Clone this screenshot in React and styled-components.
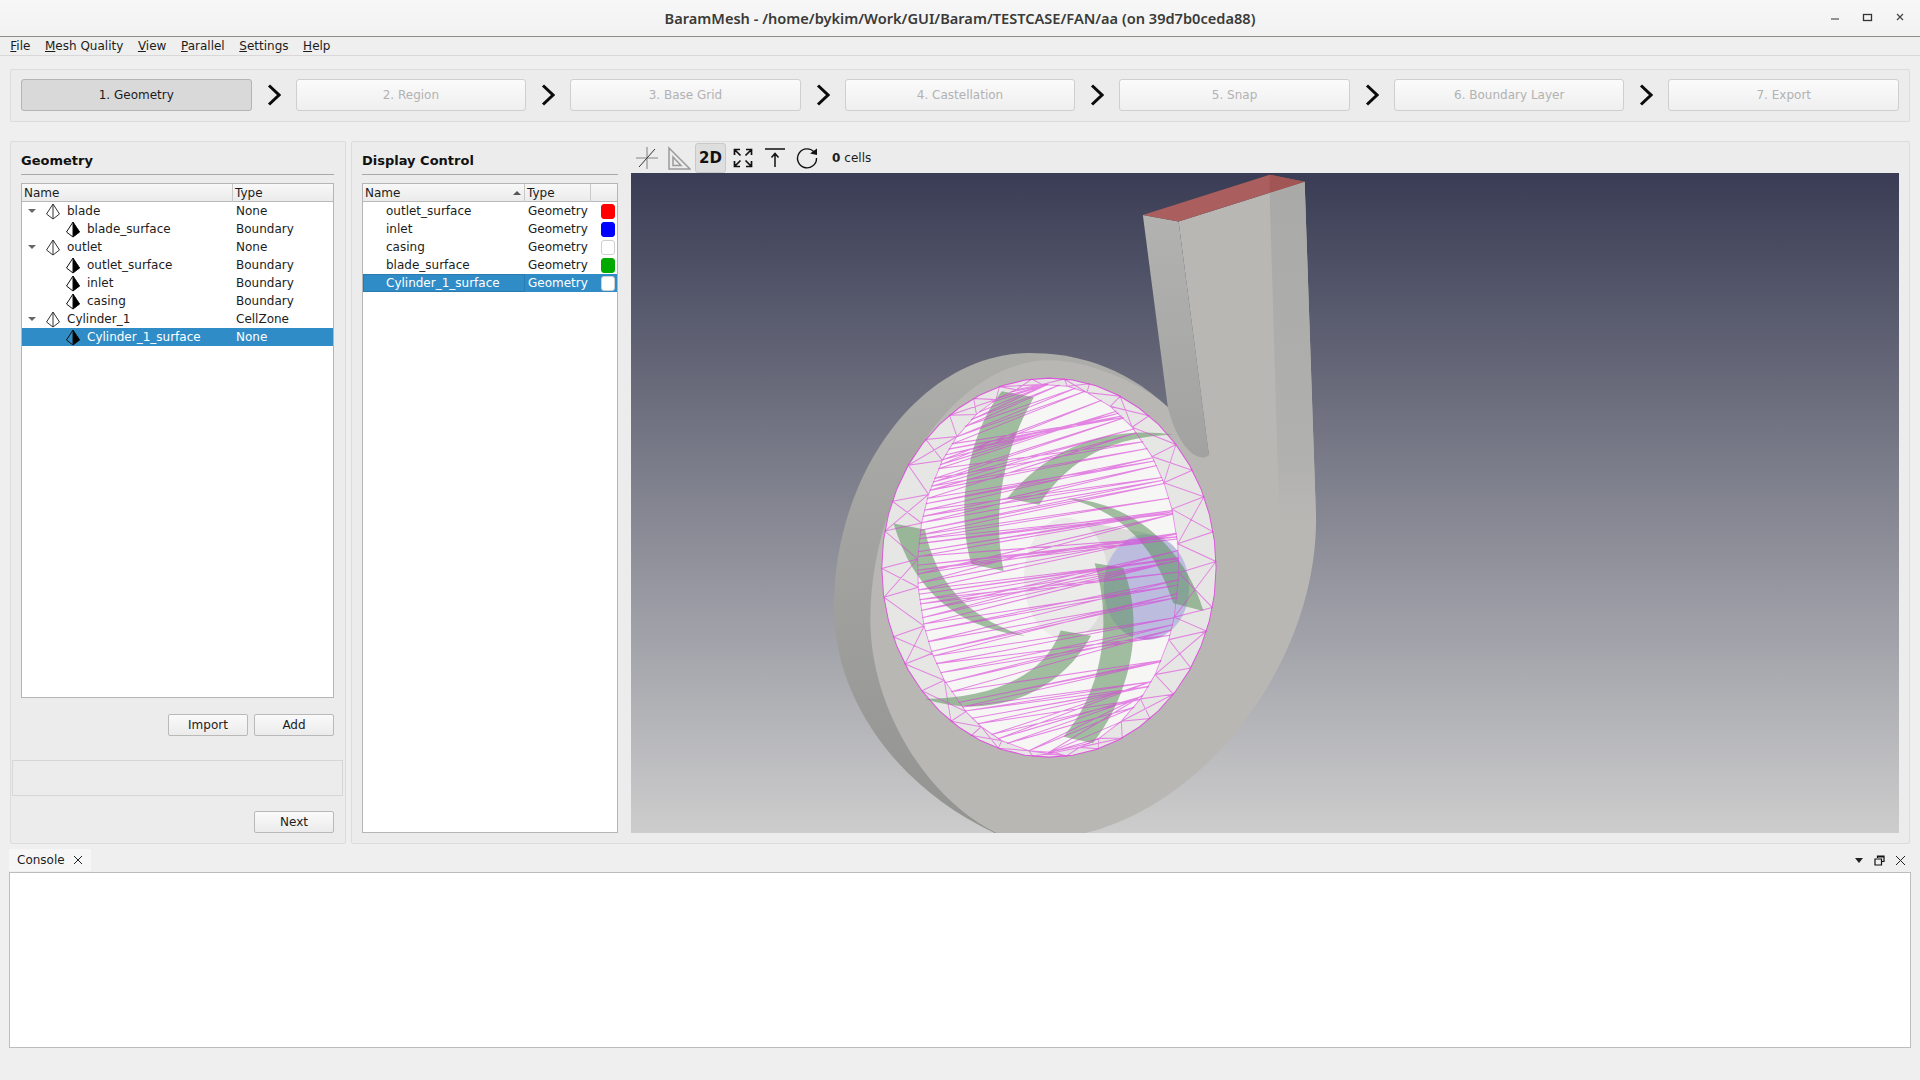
import React from 'react'
import styled, { createGlobalStyle } from 'styled-components'

const Global = createGlobalStyle`
  html, body { margin: 0; padding: 0; background: #efefef; }
  * { box-sizing: border-box; }
  body { font-family: "DejaVu Sans", sans-serif; font-size: 12px; color: #1c1c1c; }
`

const Window = styled.div`
  width: 1920px;
  height: 1080px;
  display: flex;
  flex-direction: column;
  overflow: hidden;
  background: #efefef;
`
const TitleBar = styled.header`
  height: 37px;
  flex: none;
  display: flex;
  align-items: center;
  justify-content: center;
  position: relative;
  background: linear-gradient(#f7f7f7, #f2f2f2);
  border-bottom: 1px solid #8e8e89;
  font-family: "Noto Sans", sans-serif;
  font-size: 14.6px;
  font-weight: 600;
  color: #3a3a38;
`
const WindowControls = styled.div`
  position: absolute;
  right: 13px;
  top: 11px;
  display: flex;
  gap: 21px;
`
const MenuBar = styled.nav`
  height: 19px;
  flex: none;
  display: flex;
  padding: 1px 0 0 3px;
  border-bottom: 1px solid #d8d8d8;
  line-height: 17px;
`
const MenuItem = styled.span`
  padding: 0 7.3px;
`
const StepsPanel = styled.section`
  height: 53px;
  flex: none;
  margin: 13px 10px 0;
  padding: 9px 10px 0;
  display: flex;
  background: #ececec;
  border: 1px solid #dcdcdc;
  border-radius: 2px;
`
const StepButton = styled.div`
  flex: 1;
  height: 32px;
  display: flex;
  align-items: center;
  justify-content: center;
  border-radius: 3px;
  border: 1px solid ${props => props.$active ? '#b4b4b4' : '#cfcfcf'};
  background: ${props => props.$active ? '#d9d9d9' : 'linear-gradient(#fbfbfb, #efefef)'};
  color: ${props => props.$active ? '#1c1c1c' : '#b2b2b2'};
`
const StepArrow = styled.div`
  width: 44px;
  flex: none;
  display: flex;
  align-items: center;
  justify-content: center;
  height: 32px;
`
const Columns = styled.div`
  height: 703px;
  flex: none;
  margin: 19px 10px 0;
  display: flex;
  gap: 5px;
`
const Panel = styled.section`
  background: #ececec;
  border: 1px solid #dcdcdc;
  border-radius: 2px;
`
const GeometryPanel = styled(Panel)`
  width: 336px;
  flex: none;
  padding: 0 11px 10px 10px;
  display: flex;
  flex-direction: column;
`
const ViewPanel = styled(Panel)`
  flex: 1;
  display: flex;
  padding: 0 10px 10px 10px;
`
const PanelTitle = styled.h3`
  margin: 0;
  height: 33px;
  flex: none;
  padding-top: 11px;
  font-size: 13px;
  line-height: 16px;
  font-weight: 700;
  color: #111;
  border-bottom: 1px solid #a9a9a9;
`
const Table = styled.div`
  margin-top: 8px;
  background: #fff;
  border: 1px solid #b5b5b5;
  display: flex;
  flex-direction: column;
  overflow: hidden;
`
const TreeTable = styled(Table)`
  height: 515px;
  flex: none;
`
const DisplayTable = styled(Table)`
  flex: 1;
`
const Header = styled.div`
  height: 18px;
  flex: none;
  display: grid;
  grid-template-columns: ${props => props.$cols};
  background: linear-gradient(#f8f8f8, #ebebeb);
  border-bottom: 1px solid #b9b9b9;
  line-height: 18px;
`
const HeaderCell = styled.div`
  padding-left: 2px;
  border-right: 1px solid #c8c8c8;
  position: relative;
  &:last-child { border-right: 0; }
`
const SortMark = styled.span`
  position: absolute;
  right: 3px;
  top: 7px;
  border-left: 4px solid transparent;
  border-right: 4px solid transparent;
  border-bottom: 4px solid #555;
`
const Row = styled.div`
  height: 18px;
  flex: none;
  display: grid;
  grid-template-columns: ${props => props.$cols};
  align-items: center;
  background: ${props => props.$selected ? '#308cc6' : 'transparent'};
  color: ${props => props.$selected ? '#fff' : '#1c1c1c'};
  line-height: 18px;
  white-space: nowrap;
`
const NameCell = styled.div`
  display: flex;
  align-items: center;
  padding-left: ${props => props.$child ? 43 : 6}px;
`
const Expander = styled.span`
  width: 0;
  height: 0;
  margin-right: 9px;
  border-left: 4px solid transparent;
  border-right: 4px solid transparent;
  border-top: 4px solid #666;
`
const ItemIcon = styled.svg`
  width: 16px;
  height: 17px;
  margin-right: 6px;
  flex: none;
`
const TypeCell = styled.div`
  padding-left: 3px;
`
const ColorName = styled.div`
  padding-left: 23px;
  height: 18px;
  outline: ${props => props.$focus ? '1px solid #2a7cb0' : 'none'};
  outline-offset: -1px;
`
const Swatch = styled.span`
  width: 14px;
  height: 15px;
  margin-left: 10px;
  border-radius: 3px;
  background: ${props => props.$color};
  border: 1px solid ${props => props.$color === '#ffffff' ? '#cfcfcf' : props.$color};
  display: block;
`
const ButtonRow = styled.div`
  display: flex;
  justify-content: flex-end;
  gap: 6px;
  margin-top: ${props => props.$top}px;
`
const Button = styled.div`
  width: 80px;
  height: 22px;
  display: flex;
  align-items: center;
  justify-content: center;
  border: 1px solid #b9b9b9;
  border-radius: 2px;
  background: linear-gradient(#fafafa, #ebebeb);
`
const MessageBox = styled.div`
  height: 36px;
  margin: 24px -9px 0 -9px;
  border: 1px solid #d6d6d6;
  flex: none;
`
const DisplayColumn = styled.div`
  width: 256px;
  flex: none;
  display: flex;
  flex-direction: column;
`
const ViewColumn = styled.div`
  flex: 1;
  margin-left: 13px;
  display: flex;
  flex-direction: column;
`
const Toolbar = styled.div`
  height: 31px;
  flex: none;
  display: flex;
  align-items: center;
  gap: 1px;
`
const ToolButton = styled.div`
  width: 31px;
  height: 30px;
  display: flex;
  align-items: center;
  justify-content: center;
  border-radius: 3px;
  border: 1px solid ${props => props.$on ? '#c8c8c8' : 'transparent'};
  background: ${props => props.$on ? '#dedede' : 'transparent'};
  font-size: 15px;
  font-weight: 700;
  color: #111;
`
const CellCount = styled.span`
  margin-left: 9px;
  font-size: 12px;
  b { margin-right: 4px; }
`
const Viewport = styled.svg`
  flex: 1;
  display: block;
  width: 100%;
  min-height: 0;
  background: linear-gradient(#393c54, #cdcdcd);
`
const DockHead = styled.div`
  height: 28px;
  flex: none;
  margin-left: 9px;
  padding: 5px 14px 0 0;
  display: flex;
  justify-content: space-between;
`
const ConsoleTab = styled.div`
  width: 82px;
  height: 22px;
  display: flex;
  align-items: center;
  gap: 8px;
  padding-left: 8px;
  background: #f6f6f6;
`
const DockButtons = styled.div`
  display: flex;
  align-items: center;
  gap: 10px;
  height: 23px;
`
const ConsoleBody = styled.div`
  height: 176px;
  flex: none;
  margin: 0 9px;
  background: #fff;
  border: 1px solid #bcbcbc;
`

const STEPS = ['1. Geometry', '2. Region', '3. Base Grid', '4. Castellation', '5. Snap', '6. Boundary Layer', '7. Export']
const MENUS = [['F', 'ile'], ['M', 'esh Quality'], ['V', 'iew'], ['P', 'arallel'], ['S', 'ettings'], ['H', 'elp']]
const TREE = [
  { name: 'blade', type: 'None' },
  { name: 'blade_surface', type: 'Boundary', child: true },
  { name: 'outlet', type: 'None' },
  { name: 'outlet_surface', type: 'Boundary', child: true },
  { name: 'inlet', type: 'Boundary', child: true },
  { name: 'casing', type: 'Boundary', child: true },
  { name: 'Cylinder_1', type: 'CellZone' },
  { name: 'Cylinder_1_surface', type: 'None', child: true, selected: true },
]
const DISPLAY = [
  { name: 'outlet_surface', color: '#ff0000' },
  { name: 'inlet', color: '#0000ff' },
  { name: 'casing', color: '#ffffff' },
  { name: 'blade_surface', color: '#00aa00' },
  { name: 'Cylinder_1_surface', color: '#ffffff', selected: true },
]
const TREE_COLS = '211px 1fr'
const DISPLAY_COLS = '162px 66px 1fr'

const PyramidIcon = ({ filled }) => (
  <ItemIcon viewBox="0 0 16 17">
    {filled && <path d="M8 1 L15 11 L8 16 Z" fill="#000" />}
    <path d="M8 1 L1.5 11 L8 16 L14.5 11 Z M8 1 V16" fill="none" stroke={filled ? '#111' : '#333'} strokeWidth="1" />
  </ItemIcon>
)

const Chevron = () => (
  <svg width="14" height="22" viewBox="0 0 14 22">
    <path d="M2 1.5 L12 11 L2 20.5" fill="none" stroke="#0b0b0b" strokeWidth="3" />
  </svg>
)

// mesh of the selected cylinder, all coordinates in the same space as the body paths
const ell = (cx, cy, rx, ry, a) => [cx + rx * Math.cos(a), cy + ry * Math.sin(a)]
const outerAt = a => ell(697, 940, 468, 437, a)
const innerAt = a => ell(695, 942, 366, 425, a)
const noise = k => {
  const v = Math.sin(k * 12.9898) * 43758.5453
  return v - Math.floor(v)
}

const ringPoints = () => {
  const out = []
  for (let i = 0; i < 44; i++) out.push(outerAt((i / 44) * Math.PI * 2))
  return out
}

const ringMesh = () => {
  let d = ''
  const n = 34
  const step = Math.PI * 2 / n
  const wobble = i => step * 0.35 * (noise(i % n) - 0.5)
  for (let i = 0; i < n; i++) {
    const a = i * step + wobble(i)
    const b = (i + 1) * step + wobble(i + 1)
    const o1 = outerAt(a), o2 = outerAt(b)
    const i1 = innerAt(a + step * 0.3), i2 = innerAt(b + step * 0.3)
    d += `M${o1} L${i1} L${o2} L${i2} M${i1} L${i2} `
    if (i % 2 === 0) d += `M${o1} L${i2} `
  }
  return d
}

const chordAt = (y, rise) => {
  const clamp = v => Math.max(-1, Math.min(1, v))
  const left = innerAt(Math.PI - Math.asin(clamp((y - 942) / 425)))
  const right = innerAt(Math.asin(clamp((y - rise - 942) / 425)))
  return [left, right]
}

const chordMesh = () => {
  let d = ''
  // long uneven chords across the disc, rising a bit to the right
  let y = 535
  for (let k = 0; y < 1430; k++) {
    const [l, r] = chordAt(y, 45 + noise(k) * 95)
    y += 8 + noise(k + 50) * 18
    const [l2] = chordAt(y, 60)
    d += `M${l} L${r} L${l2} `
  }
  return d
}

const BLADES = [
  'M565,533 L655,547 C590,640 530,780 570,948 L480,932 C430,790 480,620 565,533 Z',
  'M580,780 C690,670 850,610 1045,633 C880,640 760,680 670,795 Z',
  'M262,838 L350,852 C380,980 480,1060 630,1097 C450,1080 320,1000 262,838 Z',
  'M350,1243 C520,1240 680,1200 730,1085 L815,1097 C720,1240 520,1290 350,1243 Z',
  'M825,930 L905,940 C970,1080 920,1240 820,1345 L738,1330 C840,1230 880,1080 825,930 Z',
  'M750,780 C920,790 1070,880 1130,1040 L1045,1022 C990,880 890,810 750,780 Z',
]

const FanModel = () => (
  <Viewport viewBox="0 0 1268 660" preserveAspectRatio="none">
    <defs>
      <linearGradient id="backShade" x1="0" y1="0" x2="0" y2="1">
        <stop offset="0" stopColor="#adadaa" />
        <stop offset="1" stopColor="#939391" />
      </linearGradient>
      <linearGradient id="ductShade" x1="0" y1="0" x2="0" y2="1">
        <stop offset="0" stopColor="#b2b2b0" />
        <stop offset="1" stopColor="#a2a2a0" />
      </linearGradient>
      <linearGradient id="sideFade" x1="0" y1="0" x2="0" y2="1">
        <stop offset="0" stopColor="#a9a9a7" />
        <stop offset="0.8" stopColor="#b0b0ae" />
        <stop offset="1" stopColor="#b8b7b4" />
      </linearGradient>
    </defs>
    <g transform="translate(169 -13) scale(0.35714 0.43365)">
      <path d="M1030,570 C900,470 760,445 640,445 C330,450 95,730 95,1030 C95,1250 280,1450 545,1552 L700,1552 Z" fill="url(#backShade)" />
      <path d="M1060,142 L1413,50 L1445,830 C1445,1150 1150,1480 800,1552 L550,1552 C350,1470 197,1260 197,1060 C197,760 430,462 700,462 C800,462 950,510 1030,570 L1145,680 Z" fill="#b8b7b4" />
      <path d="M1315,75 L1413,50 L1445,830 L1342,830 Z" fill="url(#sideFade)" />
      <path d="M960,127 L1060,142 L1145,680 C1120,700 1060,670 1030,570 Z" fill="url(#ductShade)" />
      <path d="M960,127 L1315,34 L1413,50 L1060,142 Z" fill="#aa5f5e" />
      <path d="M1315,34 L1413,50 L1315,75 Z" fill="#a15554" />
      <polygon points={ringPoints().join(' ')} fill="#e6e6e4" />
      <ellipse cx="695" cy="942" rx="366" ry="425" fill="#f6f6f4" />
      <path d="M800,835 L970,860 L1030,1060 L800,1090 Z" fill="#dcdcda" />
      <ellipse cx="745" cy="965" rx="118" ry="140" fill="#ebebe9" />
      <ellipse cx="970" cy="985" rx="120" ry="122" fill="#bcbcde" />
      {BLADES.map((d, i) => <path key={i} d={d} fill="#5a8f5a" fillOpacity="0.55" />)}
      <path d={ringMesh()} fill="none" stroke="#df3fdf" strokeOpacity="0.6" strokeWidth="2.4" />
      <path d={chordMesh()} fill="none" stroke="#d93fd9" strokeOpacity="0.62" strokeWidth="2.4" />
      <polygon points={ringPoints().join(' ')} fill="none" stroke="#df3fdf" strokeOpacity="0.85" strokeWidth="2.6" />
    </g>
  </Viewport>
)

export default function App() {
  return (
    <Window>
      <Global />
      <TitleBar>
        BaramMesh - /home/bykim/Work/GUI/Baram/TESTCASE/FAN/aa (on 39d7b0ceda88)
        <WindowControls>
          <svg width="12" height="12" viewBox="0 0 12 12"><path d="M2 8 H10" stroke="#333" strokeWidth="1" /></svg>
          <svg width="12" height="12" viewBox="0 0 12 12"><rect x="1.5" y="3.5" width="8" height="6" fill="none" stroke="#333" strokeWidth="1.3" /></svg>
          <svg width="12" height="12" viewBox="0 0 12 12"><path d="M2 3 L8 9 M8 3 L2 9" stroke="#444" strokeWidth="1.2" /></svg>
        </WindowControls>
      </TitleBar>
      <MenuBar>
        {MENUS.map(m => <MenuItem key={m[1]}><u>{m[0]}</u>{m[1]}</MenuItem>)}
      </MenuBar>
      <StepsPanel>
        {STEPS.map((s, i) => (
          <React.Fragment key={s}>
            {i > 0 && <StepArrow><Chevron /></StepArrow>}
            <StepButton $active={i === 0}>{s}</StepButton>
          </React.Fragment>
        ))}
      </StepsPanel>
      <Columns>
        <GeometryPanel>
          <PanelTitle>Geometry</PanelTitle>
          <TreeTable>
            <Header $cols={TREE_COLS}>
              <HeaderCell>Name</HeaderCell>
              <HeaderCell>Type</HeaderCell>
            </Header>
            {TREE.map(item => (
              <Row key={item.name} $cols={TREE_COLS} $selected={item.selected}>
                <NameCell $child={item.child}>
                  {!item.child && <Expander />}
                  <PyramidIcon filled={item.child} />
                  {item.name}
                </NameCell>
                <TypeCell>{item.type}</TypeCell>
              </Row>
            ))}
          </TreeTable>
          <ButtonRow $top={16}>
            <Button>Import</Button>
            <Button>Add</Button>
          </ButtonRow>
          <MessageBox />
          <ButtonRow $top={15}>
            <Button>Next</Button>
          </ButtonRow>
        </GeometryPanel>
        <ViewPanel>
          <DisplayColumn>
            <PanelTitle>Display Control</PanelTitle>
            <DisplayTable>
              <Header $cols={DISPLAY_COLS}>
                <HeaderCell>Name<SortMark /></HeaderCell>
                <HeaderCell>Type</HeaderCell>
                <HeaderCell />
              </Header>
              {DISPLAY.map(item => (
                <Row key={item.name} $cols={DISPLAY_COLS} $selected={item.selected}>
                  <ColorName $focus={item.selected}>{item.name}</ColorName>
                  <TypeCell>Geometry</TypeCell>
                  <Swatch $color={item.color} />
                </Row>
              ))}
            </DisplayTable>
          </DisplayColumn>
          <ViewColumn>
            <Toolbar>
              <ToolButton>
                <svg width="24" height="24" viewBox="0 0 24 24">
                  <path d="M12 1 V23 M1 12 H23" stroke="#a8a8a8" strokeWidth="1.6" />
                  <path d="M4 21 L20 3" stroke="#333" strokeWidth="1" />
                </svg>
              </ToolButton>
              <ToolButton>
                <svg width="24" height="24" viewBox="0 0 24 24">
                  <path d="M2 2 L23 23 H2 Z M6 11 L14 19.5 H6 Z" fill="none" stroke="#9a9a9a" strokeWidth="1.5" />
                </svg>
              </ToolButton>
              <ToolButton $on>2D</ToolButton>
              <ToolButton>
                <svg width="20" height="20" viewBox="0 0 20 20">
                  <path d="M7 1.5 H1.5 V7 M1.5 1.5 L7.5 7.5 M13 1.5 H18.5 V7 M18.5 1.5 L12.5 7.5 M7 18.5 H1.5 V13 M1.5 18.5 L7.5 12.5 M13 18.5 H18.5 V13 M18.5 18.5 L12.5 12.5" fill="none" stroke="#111" strokeWidth="1.7" />
                </svg>
              </ToolButton>
              <ToolButton>
                <svg width="22" height="20" viewBox="0 0 22 20">
                  <path d="M1 1 H21 M11 19 V6 M7.5 9.5 L11 5.5 L14.5 9.5" fill="none" stroke="#111" strokeWidth="1.5" />
                </svg>
              </ToolButton>
              <ToolButton>
                <svg width="22" height="22" viewBox="0 0 22 22">
                  <path d="M18.5 5.5 A9.5 9.5 0 1 0 20.5 11" fill="none" stroke="#111" strokeWidth="1.4" />
                  <path d="M14 6.5 L21 1.5 V8 Z" fill="#111" />
                </svg>
              </ToolButton>
              <CellCount><b>0</b>cells</CellCount>
            </Toolbar>
            <FanModel />
          </ViewColumn>
        </ViewPanel>
      </Columns>
      <DockHead>
        <ConsoleTab>
          Console
          <svg width="10" height="10" viewBox="0 0 10 10"><path d="M1 1 L9 9 M9 1 L1 9" stroke="#222" strokeWidth="1" /></svg>
        </ConsoleTab>
        <DockButtons>
          <svg width="10" height="6" viewBox="0 0 10 6"><path d="M1 0 H9 L5 5 Z" fill="#222" /></svg>
          <svg width="11" height="11" viewBox="0 0 11 11"><path d="M3.5 3 V1 H10 V6.5 H7.5 M1 4 H7.5 V10 H1 Z M3.5 2 H10" fill="none" stroke="#111" strokeWidth="1.2" /></svg>
          <svg width="11" height="11" viewBox="0 0 11 11"><path d="M1 1 L10 10 M10 1 L1 10" stroke="#222" strokeWidth="1" /></svg>
        </DockButtons>
      </DockHead>
      <ConsoleBody />
    </Window>
  )
}
